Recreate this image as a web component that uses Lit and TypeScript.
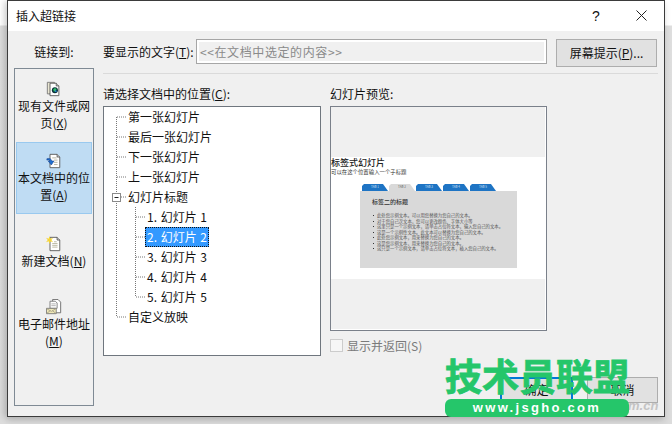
import { LitElement, html, css, svg } from "lit";
import { customElement } from "lit/decorators.js";

const FONT = `"Noto Sans CJK SC", "Noto Sans", sans-serif`;

const iconFile = svg`<svg width="16" height="16" viewBox="0 0 18 18">
  <path d="M1.500 1.500h8v13h-8z" fill="#e9e6d2" stroke="#777"/>
  <path d="M4.500 2.500h7l3 3v11h-10z" fill="#fff" stroke="#555"/>
  <path d="M11.500 2.500v3h3" fill="#ddd" stroke="#555"/>
  <circle cx="10" cy="10.500" r="3.400" fill="#08303a"/>
  <path d="M8 9.500l2-1.500 2 1-1 2-2 1z" fill="#2ec06a"/><circle cx="11" cy="11.500" r="1" fill="#2a7fd0"/>
</svg>`;
const iconPlace = svg`<svg width="16" height="16" viewBox="0 0 18 18">
  <path d="M4.500 1.500h8l3 3v12h-11z" fill="#fff" stroke="#555"/>
  <path d="M12.500 1.500v3h3" fill="#ddd" stroke="#555"/>
  <path d="M7 5.500h5M9 8h4M9 10.500h4M9 13h4" stroke="#b0ad9a"/>
  <path d="M1 6.500c3-1 5 0 5.500 2.500L9 9l-3 4.500L2.500 9 4.500 9C4 8 3 7.500 1 8z" fill="#1e6fd0" stroke="#123f8a" stroke-width=".6"/>
</svg>`;
const iconNew = svg`<svg width="16" height="16" viewBox="0 0 18 18">
  <path d="M4.500 1.500h8l3 3v12h-11z" fill="#fff" stroke="#555"/>
  <path d="M12.500 1.500v3h3" fill="#ddd" stroke="#555"/>
  <path d="M7 8.500h6M7 10.500h6M7 12.500h6M9 6.500h3" stroke="#b5b29c"/>
  <path d="M4 0l1 3 3-1-2 2.500L8 7 5 6 4 9 3 6 0 7l2-2.500L0 2l3 1z" fill="#f6d534"/>
</svg>`;
const iconMail = svg`<svg width="16" height="16" viewBox="0 0 18 18">
  <path d="M7.500 .5h6l3 3v12h-9z" fill="#fff" stroke="#666"/>
  <path d="M4.500 2.500h6l2 2v6h-8z" fill="#fff" stroke="#777"/>
  <path d="M6 5.500h5M6 7.500h5" stroke="#aaa"/>
  <path d="M.5 10.500h11v6H.5z" fill="#f0e9b8" stroke="#777"/>
  <path d="M1 11l5 3 5-3M1 16l4-3M11 16l-4-3" fill="none" stroke="#a9a48a"/>
</svg>`;

const bullets = [
  "此处您示例文本。可以用您替换为您自己的文本。",
  "对于您自己次文本，您可以更改颜色、字体大小等",
  "这里只是一个示例文本，请单击占位符文本，输入您自己的文本。",
  "这是一个示例性文本。此文本可以替换为您自己的文本。",
  "此处您示例文本，用来替换为您自己的文本。",
  "这是您示例文本，用来替换为您自己的文本。",
  "这只是一个示例文本，请单击占位符文本，插入您自己的文本。",
];

@customElement("slide-preview")
class SlidePreview extends LitElement {
  static styles = css`
    :host { display: block; width: 217px; height: 225px; box-sizing: border-box; border: 1px solid #7a808a; background: #fff; padding: 0 1px 1px 0; font-family: "Noto Sans CJK SC", "Noto Sans", sans-serif; }
    .frame { display: flex; flex-direction: column; height: 100%; background: #f0f0f0; }
    .band { flex: 0 0 50px; }
    .slide { flex: 0 0 122px; background: #fff; display: flex; flex-direction: column; overflow: hidden; }
    .t { font-size: 9px; line-height: 12px; font-weight: 500; color: #222; }
    .s { font-size: 5.400px; line-height: 6px; color: #333; margin-top: 0; }
    .tabs { display: flex; margin: 9px 0 0 31px; height: 7px; }
    .tab { width: 26px; margin-right: 1px; height: 7px; background: #1e74c4; clip-path: polygon(2px 0, 21px 0, 26px 7px, 0 7px, 0 2px); color: #cfe2f5; font-size: 3px; line-height: 7px; text-align: center; }
    .tab.on { background: #d9d9d9; color: #666; }
    .panel { margin-left: 29px; width: 157px; height: 77px; box-sizing: border-box; background: #d9d9d9; padding: 7px 0 0 12px; }
    .h { font-size: 6px; line-height: 8px; color: #333; font-weight: 500; }
    ul { margin: 7px 0 0; padding: 0 0 0 5px; list-style: none; }
    li { font-size: 4.350px; line-height: 5.500px; color: #555; white-space: nowrap; position: relative; }
    li::before { content: ""; position: absolute; left: -4px; top: 2px; width: 1px; height: 1px; background: #333; }
  `;
  render() {
    return html`<div class="frame">
      <div class="band"></div>
      <div class="slide">
        <div class="t">标签式幻灯片</div>
        <div class="s">可以在这个位置输入一个子标题</div>
        <div class="tabs">
          ${["TAB 1", "TAB 2", "TAB 3", "TAB 4", "TAB 5"].map((t, i) => html`<div class="tab ${i === 1 ? "on" : ""}">${t}</div>`)}
        </div>
        <div class="panel">
          <div class="h">标签二的标题</div>
          <ul>${bullets.map((b) => html`<li>${b}</li>`)}</ul>
        </div>
      </div>
    </div>`;
  }
}

@customElement("app-root")
class AppRoot extends LitElement {
  static styles = css`
    :host { display: block; width: 672px; height: 424px; position: relative; overflow: hidden; background: linear-gradient(#fff 0, #fff 25px, #dedede 26px, #dcdcdc 100%); font-family: "Noto Sans CJK SC", "Noto Sans", sans-serif; font-size: 12px; color: #111; }
    u { text-decoration-thickness: 1px; text-underline-offset: 1px; }
    .dialog { margin-left: 7px; width: 658px; height: 417px; box-sizing: border-box; border: 1px solid #3b3b3b; display: flex; flex-direction: column; background: #f0f0f0; box-shadow: -4px 0 6px rgba(0,0,0,.12), 0 4px 6px rgba(0,0,0,.12); }
    .title { flex: 0 0 30px; background: #fff; display: flex; align-items: center; padding-left: 8px; font-size: 12px; line-height: 30px; }
    .title .name { flex: 1; }
    .help { width: 24px; text-align: center; font-size: 14px; margin-right: 21px; font-family: "Liberation Sans", sans-serif; }
    .close { width: 24px; display: flex; justify-content: center; margin: 0 11px 2px 0; }
    .body { flex: 1; display: flex; gap: 9px; padding: 8px 6px 0 6px; min-height: 0; }
    .left { flex: 0 0 80px; display: flex; flex-direction: column; }
    .left .cap { height: 29px; line-height: 26px; text-align: center; }
    .bar { height: 338px; box-sizing: border-box; border: 1px solid #7f8a94; padding: 0 1px; display: flex; flex-direction: column; }
    .item { display: flex; flex-direction: column; align-items: center; text-align: center; line-height: 17px; box-sizing: border-box; }
    .item svg { display: block; }
    .i1 { height: 73px; padding-top: 12px; }
    .i2 { height: 72px; padding-top: 10px; background: #bfdcf3; border: 1px solid #99c9ef; }
    .i3 { height: 63px; padding-top: 22px; }
    .i4 { height: 100px; padding-top: 22px; }
    .main { flex: 1; display: flex; flex-direction: column; min-width: 0; }
    .top { display: flex; height: 28px; align-items: flex-start; }
    .top label { width: 93px; line-height: 26px; white-space: nowrap; }
    .input { width: 351px; height: 25px; box-sizing: border-box; border: 1px solid #a6a6a6; background: #f0f0f0; box-shadow: inset 0 0 0 2px #fff; color: #8a8a8a; line-height: 23px; padding-left: 3px; letter-spacing: .6px; white-space: nowrap; overflow: hidden; }
    .btn { box-sizing: border-box; border: 1px solid #adadad; background: #e1e1e1; text-align: center; color: #111; }
    .tip { width: 101px; height: 28px; line-height: 26px; margin-left: 9px; }
    .rule { height: 1px; background: #dadada; margin: 6px 0 0; }
    .cols { display: flex; gap: 9px; margin-top: 11px; }
    .col-t { height: 21px; line-height: 17px; white-space: nowrap; }
    .tree { position: relative; width: 218px; height: 250px; box-sizing: border-box; border: 1px solid #6f767e; background: #fff; }
    .lines { position: absolute; left: 0; top: 0; }
    .row { height: 20px; line-height: 20px; padding-left: 24px; white-space: nowrap; position: relative; }
    .row.c { padding-left: 43px; word-spacing: 1px; }
    .row .sel { display: inline-block; background: #3399ff; color: #fff; outline: 1px dotted #111; outline-offset: -1px; height: 20px; padding: 0 2px; margin-left: -2px; }
    .check { display: flex; align-items: center; gap: 4px; margin-top: 8px; color: #7a7a7a; height: 13px; }
    .box { width: 13px; height: 13px; box-sizing: border-box; border: 1px solid #ccc; background: #f6f6f6; }
    .actions { display: flex; justify-content: flex-end; gap: 14px; margin-top: 21px; }
    .actions .btn { width: 71px; height: 26px; line-height: 24px; }
    .actions .ok { width: 73px; border: 2px solid #0078d7; line-height: 22px; }
    .mark { position: absolute; left: 445px; top: 352px; width: 184px; text-align: center; pointer-events: none; }
    .mark .cn { font-size: 37px; line-height: 47px; font-weight: 700; color: #25c66a; -webkit-text-stroke: .8px #25c66a; white-space: nowrap; }
    .mark .url { height: 18px; background: #25c66a; border-radius: 6px; color: #fff; font-family: "Liberation Sans", sans-serif; font-weight: 700; font-size: 13px; line-height: 18px; letter-spacing: 2.300px; white-space: nowrap; }
    .ghost { position: absolute; left: 628px; top: 399px; font: italic 700 13px/14px "Liberation Sans", sans-serif; color: #c4c4c4; }
  `;

  render() {
    const tops = ["第一张幻灯片", "最后一张幻灯片", "下一张幻灯片", "上一张幻灯片"];
    const kids = ["1. 幻灯片 1", "2. 幻灯片 2", "3. 幻灯片 3", "4. 幻灯片 4", "5. 幻灯片 5"];
    return html`
      <div class="dialog">
        <div class="title">
          <span class="name">插入超链接</span>
          <span class="help">?</span>
          <span class="close"><svg width="11" height="11" viewBox="0 0 11 11"><path d="M.5.5l10 10M10.500.5l-10 10" stroke="#222" fill="none"/></svg></span>
        </div>
        <div class="body">
          <div class="left">
            <div class="cap">链接到:</div>
            <div class="bar">
              <div class="item i1">${iconFile}<span>现有文件或网<br />页(<u>X</u>)</span></div>
              <div class="item i2">${iconPlace}<span>本文档中的位<br />置(<u>A</u>)</span></div>
              <div class="item i3">${iconNew}<span>新建文档(<u>N</u>)</span></div>
              <div class="item i4">${iconMail}<span>电子邮件地址<br />(<u>M</u>)</span></div>
            </div>
          </div>
          <div class="main">
            <div class="top">
              <label>要显示的文字(<u>T</u>):</label>
              <div class="input">&lt;&lt;在文档中选定的内容&gt;&gt;</div>
              <div class="btn tip">屏幕提示(<u>P</u>)...</div>
            </div>
            <div class="rule"></div>
            <div class="cols">
              <div>
                <div class="col-t">请选择文档中的位置(<u>C</u>):</div>
                <div class="tree">
                  <svg class="lines" width="216" height="248" viewBox="0 0 216 248">
                    <g stroke="#777" stroke-dasharray="1 1" fill="none">
                      <path d="M12.500 10v200M13 10h9M13 30h9M13 50h9M13 70h9M13 90h9M13 210h9"/>
                      <path d="M31.500 100v90M32 110h9M32 130h9M32 150h9M32 170h9M32 190h9"/>
                    </g>
                    <rect x="8.500" y="86.500" width="8" height="8" fill="#fff" stroke="#8a8a8a"/>
                    <path d="M10.500 90.500h4" stroke="#222"/>
                  </svg>
                  ${tops.map((t) => html`<div class="row">${t}</div>`)}
                  <div class="row">幻灯片标题</div>
                  ${kids.map((k, i) => html`<div class="row c">${i === 1 ? html`<span class="sel">${k}</span>` : k}</div>`)}
                  <div class="row">自定义放映</div>
                </div>
              </div>
              <div>
                <div class="col-t">幻灯片预览:</div>
                <slide-preview></slide-preview>
                <div class="check"><span class="box"></span><span>显示并返回(S)</span></div>
              </div>
            </div>
            <div class="actions">
              <div class="btn ok">确定</div>
              <div class="btn">取消</div>
            </div>
          </div>
        </div>
      </div>
      <div class="ghost">m.cn</div>
      <div class="mark">
        <div class="cn">技术员联盟</div>
        <div class="url">www.jsgho.com</div>
      </div>
    `;
  }
}
